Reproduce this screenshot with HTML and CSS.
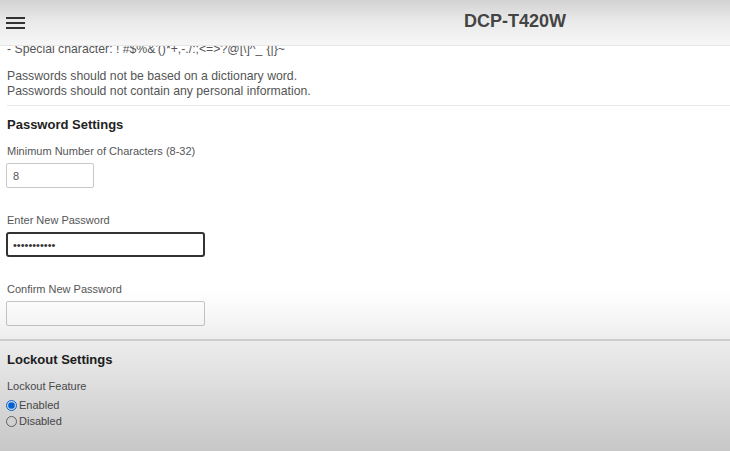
FILE: index.html
```html
<!DOCTYPE html>
<html lang="en">
<head>
    <meta charset="UTF-8">
    <meta name="viewport" content="width=device-width, initial-scale=1.0">
    <title>DCP-T420W</title>
    <link rel="stylesheet" href="styles.css">
</head>
<body>
    <header class="topbar">
        <div class="menu-col">
            <button type="button" class="menu-btn" aria-label="Menu">
                <span></span><span></span><span></span>
            </button>
        </div>
        <div class="title-col">
            <h1 class="model">DCP-T420W</h1>
        </div>
    </header>

    <main class="page">
        <div class="section first">
            <p class="rule">- Special character: ! #$%&amp;'()*+,-./:;&lt;=&gt;?@[\]^_`{|}~</p>
            <p class="notes">
                Passwords should not be based on a dictionary word.<br>
                Passwords should not contain any personal information.
            </p>
            <hr class="sep-inner">
        </div>

        <div class="section">
            <h2>Password Settings</h2>
            <div class="field">
                <label for="min-chars">Minimum Number of Characters (8-32)</label>
                <input type="text" id="min-chars" class="input short" value="8">
            </div>
            <div class="field">
                <label for="new-pass">Enter New Password</label>
                <input type="password" id="new-pass" class="input wide focused" value="abcdefghijk">
            </div>
            <div class="field last">
                <label for="confirm-pass">Confirm New Password</label>
                <input type="password" id="confirm-pass" class="input wide">
            </div>
        </div>

        <hr class="sep-full">

        <div class="section">
            <h2>Lockout Settings</h2>
            <p class="label">Lockout Feature</p>
            <label class="radio"><input type="radio" name="lockout" checked>Enabled</label>
            <label class="radio"><input type="radio" name="lockout">Disabled</label>
        </div>
    </main>

    <div class="vignette"></div>
</body>
</html>
```

FILE: styles.css
```css
body {
    font-family: "Liberation Sans", Arial, sans-serif;
    background-color: #fff;
    color: #555;
    margin: 0;
    padding: 0;
}

.topbar {
    position: fixed;
    top: 0;
    left: 0;
    right: 0;
    height: 45px;
    display: grid;
    grid-template-columns: 300px 1fr;
    align-items: center;
    background: linear-gradient(to bottom, #d2d2d2 0%, #e9e9e9 45%, #f7f7f7 100%);
    border-bottom: 1px solid #e6e6e6;
    z-index: 2;
}

.menu-col {
    padding-left: 6px;
}

.menu-btn {
    display: flex;
    flex-direction: column;
    gap: 3px;
    width: 19px;
    padding: 0;
    border: none;
    background: none;
    cursor: pointer;
}

.menu-btn span {
    display: block;
    height: 2px;
    background-color: #333;
}

.title-col {
    text-align: center;
}

.model {
    margin: 0;
    font-size: 18px;
    font-weight: bold;
    color: #444;
    padding-bottom: 2px;
}

.page {
    padding-top: 42px;
}

.section {
    padding-left: 7px;
}

.rule {
    margin: 0;
    font-size: 12.25px;
    line-height: 15px;
}

.notes {
    margin: 12px 0 0;
    font-size: 12.25px;
    line-height: 15px;
}

.sep-inner {
    border: none;
    border-top: 1px solid #e8e8e8;
    margin: 6px 0 0;
}

h2 {
    margin: 11px 0 0;
    font-size: 13px;
    line-height: 16px;
    color: #222;
}

.field {
    margin-top: 11px;
}

.field + .field {
    margin-top: 25px;
}

.field label,
.label {
    display: block;
    font-size: 11px;
    line-height: 14px;
    margin: 0 0 5px;
}

.label {
    margin-top: 11px;
    margin-bottom: 4px;
}

.input {
    display: block;
    box-sizing: border-box;
    height: 25px;
    padding: 0 6px;
    margin: 0 0 0 -1px;
    font-family: "Liberation Sans", Arial, sans-serif;
    font-size: 11px;
    color: #555;
    background-color: #fff;
    border: 1px solid #c8c8c8;
    border-radius: 2px;
    outline: none;
}

.short {
    width: 88px;
}

.wide {
    width: 199px;
}

.focused {
    border: 2px solid #333;
    border-radius: 3px;
    padding-left: 5px;
    color: #333;
}

.sep-full {
    border: none;
    border-top: 2px solid #dcdcdc;
    margin: 13px 0 0;
}

.radio {
    display: flex;
    align-items: center;
    height: 16px;
    font-size: 11px;
    line-height: 16px;
    margin-left: -7px;
}

.radio input {
    width: 11px;
    height: 11px;
    margin: 0 2px 0 6px;
}

.vignette {
    position: fixed;
    left: 0;
    right: 0;
    bottom: 0;
    height: 161px;
    pointer-events: none;
    background: linear-gradient(to bottom,
        rgba(0, 0, 0, 0) 0%,
        rgba(0, 0, 0, 0.04) 19%,
        rgba(0, 0, 0, 0.08) 34%,
        rgba(0, 0, 0, 0.22) 100%);
    z-index: 3;
}
```
